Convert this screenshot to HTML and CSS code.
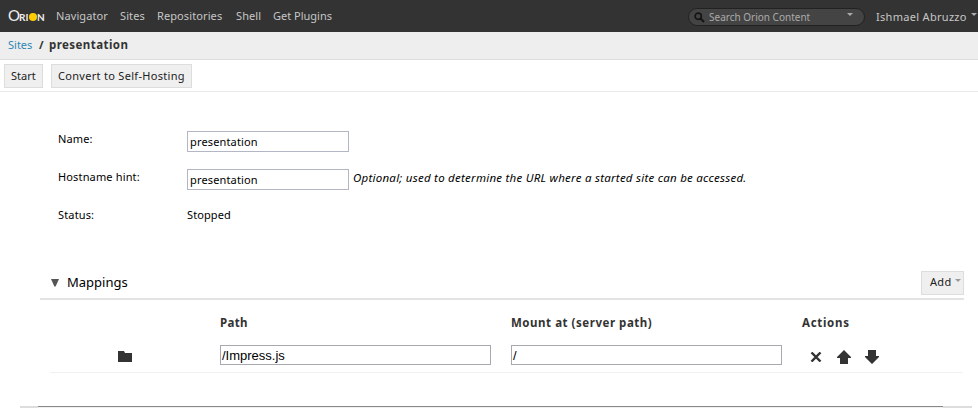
FILE: index.html
```html
<!DOCTYPE html>
<html lang="en">
<head>
<meta charset="utf-8">
<title>Sites / presentation</title>
<link rel="stylesheet" href="styles.css">
</head>
<body>
<header class="banner">
  <div class="logo"><span class="logo-o">O</span><span class="logo-ri">RI</span><i class="logo-sun"></i><span class="logo-n">N</span></div>
  <nav class="links"><a>Navigator</a><a>Sites</a><a>Repositories</a><a>Shell</a><a class="plugins">Get Plugins</a></nav>
  <div class="search">
    <svg class="lens" width="11" height="11" viewBox="0 0 11 11"><circle cx="4.2" cy="4.2" r="3.1" fill="none" stroke="#151515" stroke-width="1.7"/><path d="M6.5 6.5L10 10" stroke="#151515" stroke-width="2.1"/></svg>
    <span class="hint">Search Orion Content</span>
    <svg class="caret" width="6" height="3" viewBox="0 0 6 3"><path d="M0 0h6L3 3z" fill="#aaa"/></svg>
  </div>
  <div class="user"><span>Ishmael Abruzzo</span><svg class="caret" width="6" height="3" viewBox="0 0 6 3"><path d="M0 0h6L3 3z" fill="#aaa"/></svg></div>
</header>
<div class="crumbs"><a>Sites</a><b class="slash">/</b><b class="current">presentation</b></div>
<div class="toolbar"><div class="button start">Start</div><div class="button convert">Convert to Self-Hosting</div></div>
<main>
  <section class="form">
    <div class="row"><span class="label name">Name:</span><div class="field"><span>presentation</span></div></div>
    <div class="row"><span class="label host">Hostname hint:</span><div class="field"><span>presentation</span></div><em>Optional; used to determine the URL where a started site can be accessed.</em></div>
    <div class="row"><span class="label status">Status:</span><span class="stopped">Stopped</span></div>
  </section>
  <section class="mappings">
    <div class="heading">
      <svg width="8" height="8" viewBox="0 0 8 8"><path d="M0 0h8L4.6 7.5H3.4z" fill="#555"/></svg>
      <h2>Mappings</h2>
      <div class="button add"><span>Add</span><svg class="caret" width="6" height="3" viewBox="0 0 6 3"><path d="M0 0h6L3 3z" fill="#999"/></svg></div>
    </div>
    <div class="table">
      <div class="cells head"><span></span><b class="h-path">Path</b><b class="h-mount">Mount at (server path)</b><b class="h-actions">Actions</b></div>
      <div class="cells entry">
        <svg class="folder" width="14" height="11" viewBox="0 0 14 11"><path d="M0 0h6l1 2h7v9H0z" fill="#333"/></svg>
        <div class="path">/Impress.js</div>
        <div class="path">/</div>
        <div class="actions">
          <svg width="12" height="10" viewBox="0 0 12 10"><path d="M1.5 .5L10.5 9.5M10.5 .5L1.5 9.5" stroke="#333" stroke-width="2.4"/></svg>
          <svg width="14" height="14" viewBox="0 0 14 14"><path d="M7 0l7 7v1h-3v6H3V8H0V7z" fill="#333"/></svg>
          <svg width="14" height="14" viewBox="0 0 14 14"><path d="M3 0h8v6h3v1l-7 7-7-7V6h3z" fill="#333"/></svg>
        </div>
      </div>
    </div>
  </section>
</main>
<footer><div class="panel"></div></footer>
</body>
</html>
```
FILE: styles.css
```css
* { box-sizing: border-box; }
body { margin: 0; height: 408px; overflow: hidden; background: #fff; color: #000; font: 11px/16px "Noto Sans", "Open Sans", sans-serif; white-space: nowrap; display: flex; flex-direction: column; }
svg { display: block; flex: none; }
.banner { height: 32px; flex: none; background: #333; color: #c6c6c6; display: flex; align-items: center; padding-left: 8px; }
.logo { width: 48px; height: 20px; display: flex; align-items: baseline; color: #eee; font-family: Lato, sans-serif; line-height: 18px; }
.logo-o { font-size: 15px; width: 11px; letter-spacing: -.5px; }
.logo-ri { font-size: 10px; font-weight: 700; width: 10px; }
.logo-sun { width: 8px; height: 8px; border-radius: 50%; background: #fc0; }
.logo-n { font-size: 10px; font-weight: 700; }
.links { display: grid; grid-template-columns: 64px 37px 79px 37px 1fr; width: 632px; letter-spacing: .1px; }
.links .plugins { letter-spacing: 0; }
.search { width: 177px; height: 18px; border: 1px solid #222; border-radius: 9px; background: #444; display: flex; align-items: center; padding-left: 5px; margin-top: 2px; }
.hint { font-size: 10px; color: #aaa; width: 140px; margin-left: 4px; }
.search .caret { margin: -6px 0 0 -2px; }
.user { display: flex; align-items: center; margin: 1px 0 0 11px; gap: 4px; letter-spacing: .3px; }
.user .caret { margin-top: -4px; }
.crumbs { height: 28px; flex: none; background: #eee; border-bottom: 1px solid #ddd; display: flex; align-items: center; padding: 0 0 1px 8px; color: #333; }
.crumbs a { width: 31px; color: #3087b3; }
.slash { width: 10px; }
.current { font-size: 11.5px; letter-spacing: .43px; }
.toolbar { height: 32px; flex: none; border-bottom: 1px solid #eaeaea; padding: 4px; display: flex; gap: 8px; }
.button { height: 24px; background: #efefef; border: 1px solid #ddd; color: #222; display: flex; align-items: center; padding: 0 0 1px 6px; }
.start { width: 39px; }
.convert { width: 141px; letter-spacing: .3px; }
main { height: 314px; flex: none; }
.form { padding: 28px 0 0 58px; height: 169px; }
.row { height: 38px; padding-top: 11px; display: flex; align-items: center; }
.label { width: 129px; margin-top: -11px; letter-spacing: .15px; }
.stopped { margin-top: -11px; letter-spacing: .1px; }
.field { width: 162px; height: 21px; border: 1px solid #b3b7c5; padding: 2px 2px 0; margin-top: -6px; letter-spacing: .15px; }
.row em { margin: -9px 0 0 4px; font-size: 11.5px; letter-spacing: .25px; }
.mappings { margin: 10px 14px 0 40px; }
.heading { height: 29px; border-bottom: 2px solid #e3e3e3; display: flex; align-items: center; padding: 0 0 4px 11px; }
h2 { margin: -2px auto 0 8px; font-size: 13px; font-weight: 400; line-height: 18px; }
.add { width: 43px; padding-left: 8px; gap: 4px; letter-spacing: .3px; }
.add .caret { margin-top: -4px; }
.table { margin: 0 1px 0 10px; }
.cells { display: grid; grid-template-columns: 170px 291px 291px 1fr; align-items: center; color: #333; }
.head { height: 45px; padding-top: 1px; font-size: 11.5px; letter-spacing: .53px; }
.h-path { letter-spacing: .3px; }
.h-actions { letter-spacing: .7px; }
.entry { height: 28px; border-bottom: 1px solid #f1f1f1; padding-bottom: 7px; }
.folder { margin: 2px 0 0 68px; }
.path { width: 271px; height: 20px; border: 1px solid #a8a8b0; padding: 1px 1px 0; font: 13px/18px "Liberation Sans", Arial, sans-serif; color: #000; }
.actions { display: flex; align-items: center; gap: 14px; padding: 3px 0 0 8px; }
.actions svg:nth-child(2) { margin-left: 1px; }
footer { height: 2px; flex: none; width: 952px; margin-left: 20px; background: #ddd; padding: 0 29px 0 18px; }
.panel { height: 2px; border-top: 1px solid #888; background: #f0f0ee; }
```
